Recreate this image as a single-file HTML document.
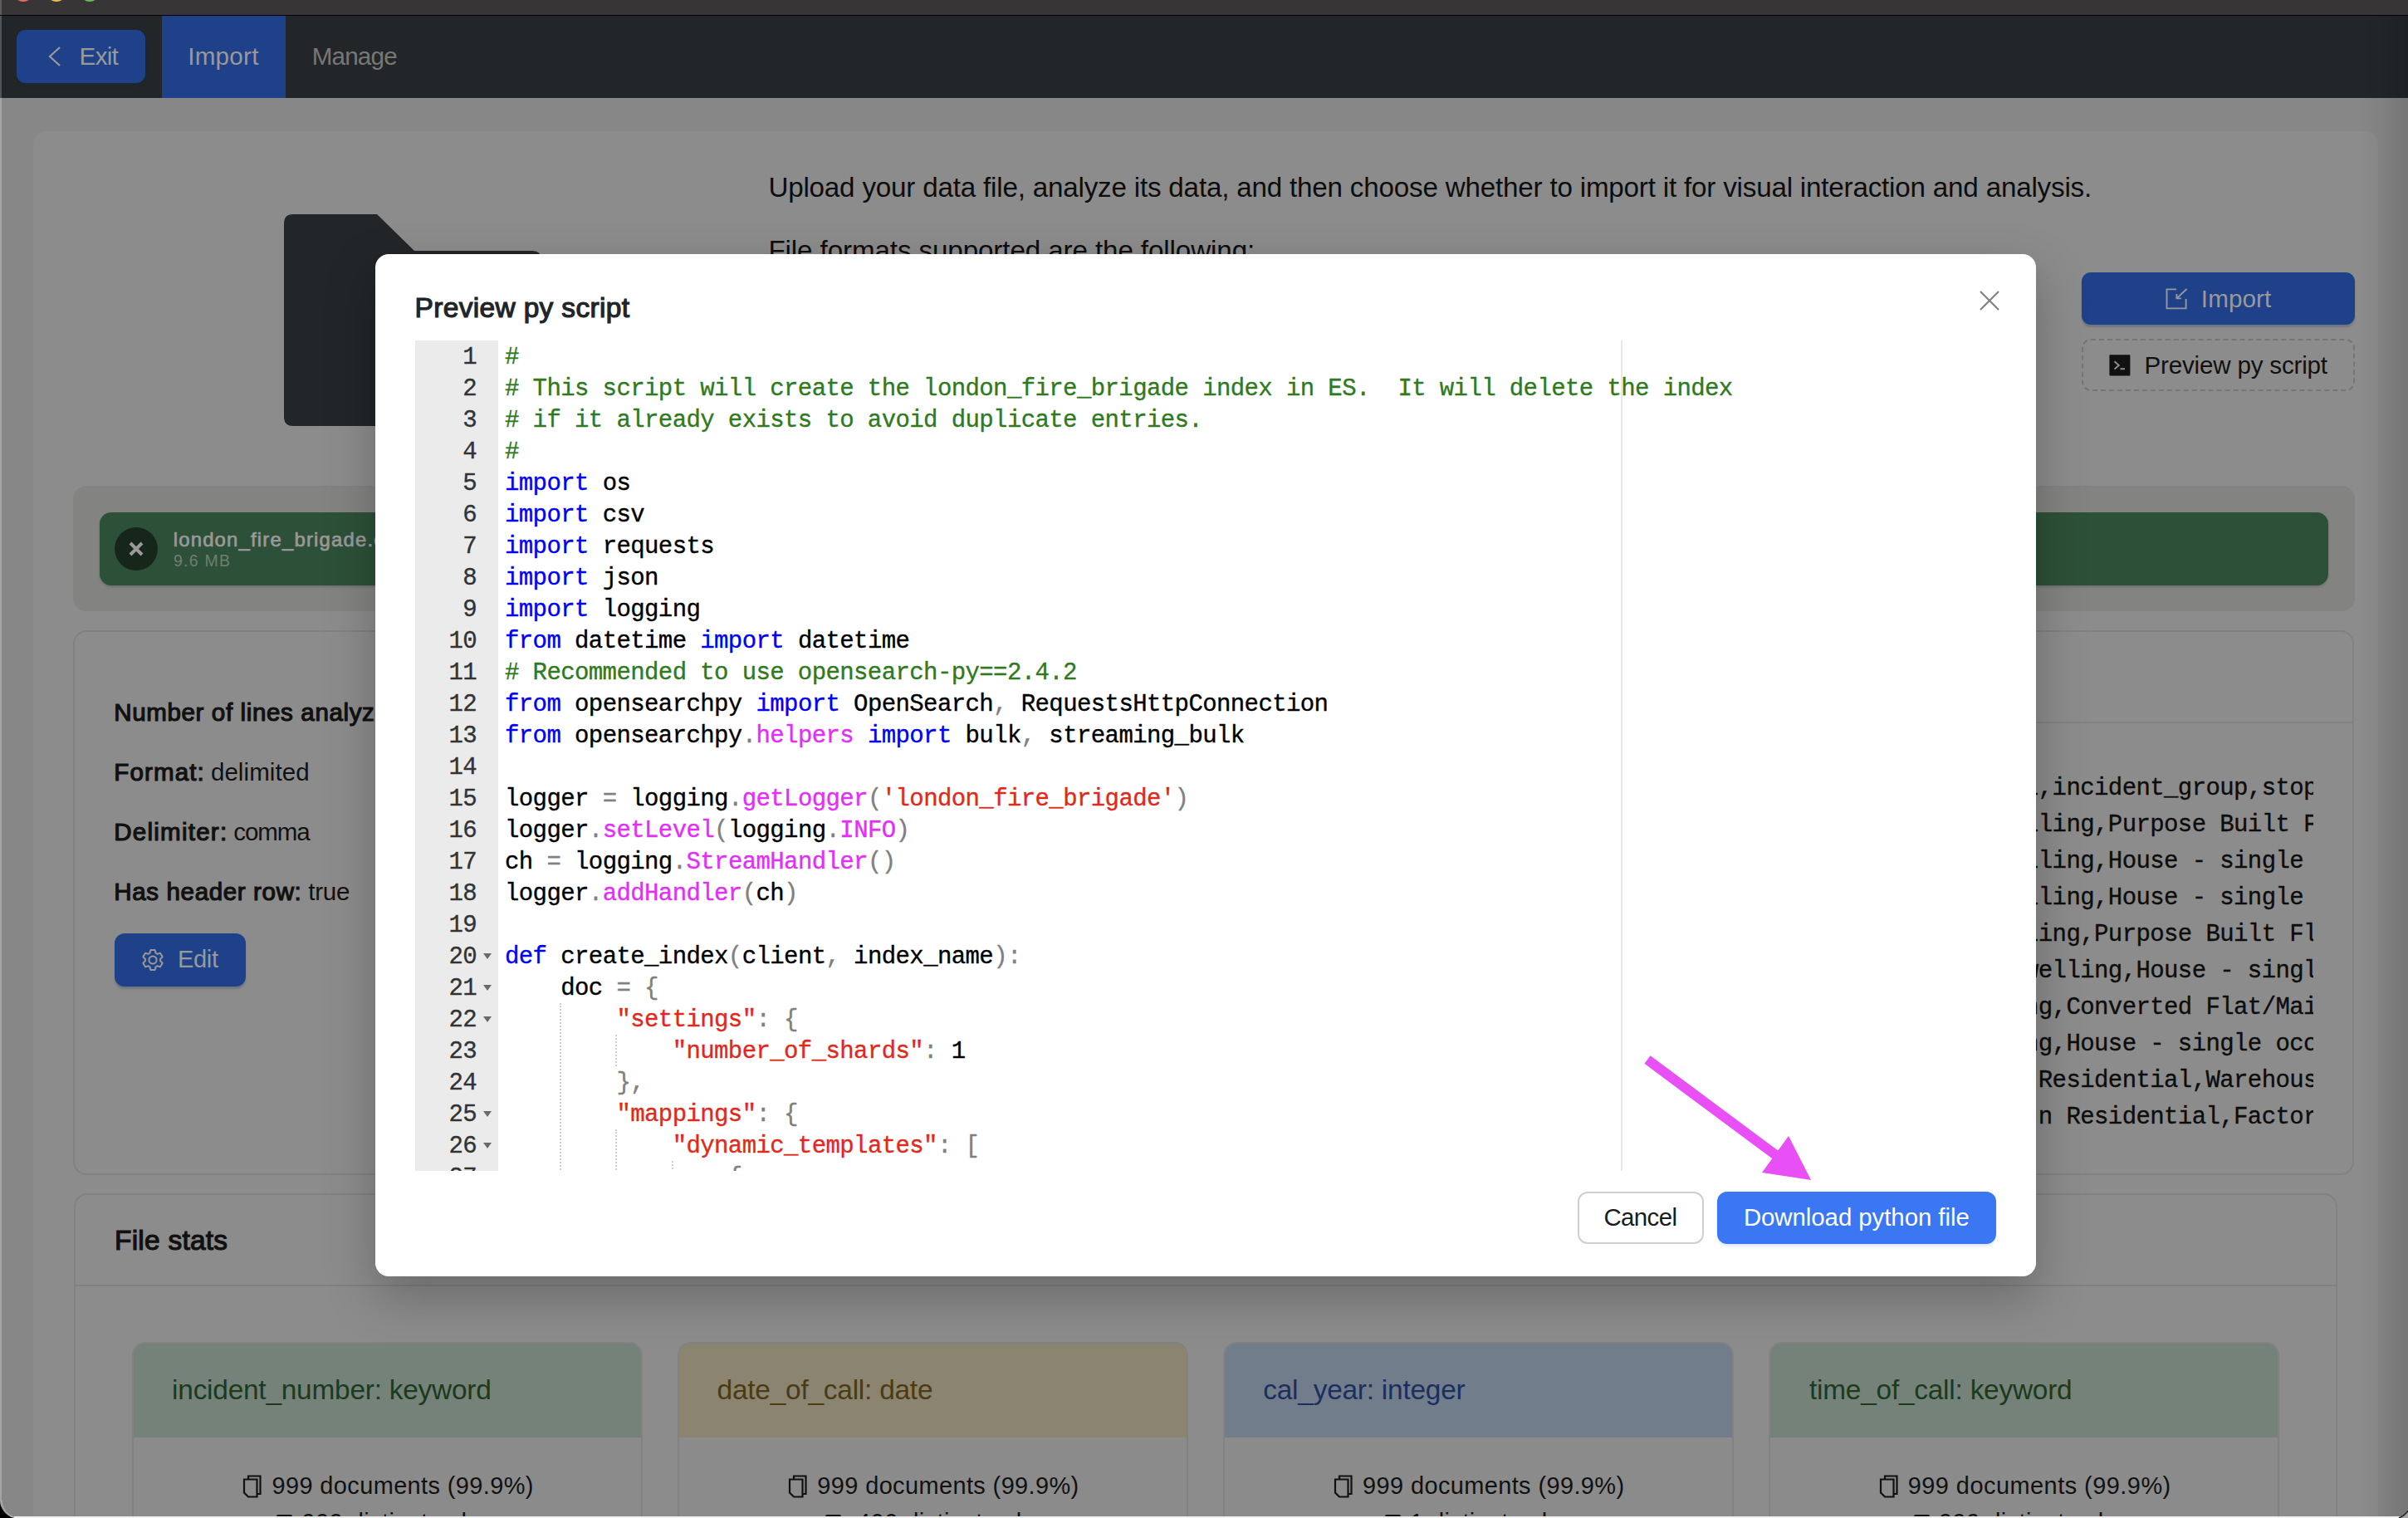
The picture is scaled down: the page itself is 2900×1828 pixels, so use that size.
<!DOCTYPE html>
<html><head><meta charset="utf-8">
<style>
*{margin:0;padding:0;box-sizing:border-box}
html,body{width:2900px;height:1828px;overflow:hidden;background:#878787;font-family:"Liberation Sans",sans-serif;position:relative}
.abs{position:absolute}
.tx{position:absolute;white-space:nowrap}
.tx b{font-weight:normal;-webkit-text-stroke:1.0px currentColor}
#titlebar{left:0;top:0;width:2900px;height:18px;background:#383536;overflow:hidden}
#titleline{left:0;top:18px;width:2900px;height:1px;background:#000}
.tl{position:absolute;top:-22px;width:24px;height:24px;border-radius:50%}
#nav{left:0;top:19px;width:2900px;height:99px;background:#222629}
#leftedge{left:0;top:19px;width:2px;height:99px;background:#50555a}
#leftedge2{left:0;top:118px;width:2px;height:1710px;background:#a4a4a4}
#exit{left:20px;top:36px;width:155px;height:64px;background:#1f418a;border-radius:11px;box-shadow:0 3px 2px rgba(30,40,60,.5)}
#importtab{left:195px;top:19px;width:149px;height:99px;background:#1f418a}
#card1{left:40px;top:158px;width:2824px;height:1700px;background:#8c8c8c;border-radius:16px}
#rightshade{left:2840px;top:19px;width:60px;height:1809px;background:linear-gradient(to right,rgba(0,0,0,0) 0%,rgba(0,0,0,.04) 40%,rgba(0,0,0,.13) 100%)}
#btnimport{left:2507px;top:328px;width:329px;height:63px;background:#1f418a;border-radius:11px;box-shadow:0 3px 2px rgba(60,80,110,.35)}
#btnprev{left:2507px;top:408px;width:329px;height:63px;border:2px dashed #757575;border-radius:11px}
#filepond{left:88px;top:585px;width:2748px;height:151px;background:#838381;border-radius:16px}
#pill{left:120px;top:617px;width:2684px;height:88px;background:#2d5038;border-radius:14px;box-shadow:0 2px 3px rgba(0,0,0,.15)}
#pillx{left:138px;top:635px;width:52px;height:52px;border-radius:50%;background:#16261b}
#stats{left:88px;top:759px;width:2747px;height:656px;border:2px solid #818181;border-radius:16px}
#statsline{left:1400px;top:869px;width:1435px;height:2px;background:#818181}
#edit{left:138px;top:1124px;width:158px;height:64px;background:#1f418a;border-radius:12px;box-shadow:0 3px 2px rgba(60,80,110,.35)}
#data{left:2354px;top:928px;width:432px;height:460px;overflow:hidden;-webkit-text-stroke:0.35px currentColor;font-family:"Liberation Mono",monospace;font-size:29px;letter-spacing:-0.6px;line-height:44px;color:#0d0d0d;white-space:pre}
#filestats{left:89px;top:1437px;width:2726px;height:500px;border:2px solid #818181;border-radius:16px}
#fsline{left:89px;top:1547px;width:2726px;height:2px;background:#818181}
.fcard{position:absolute;top:1615.5px;width:615px;height:300px;border:2px solid #828282;border-radius:16px;overflow:hidden;background:#8b8b8b}
.fhead{position:absolute;left:0;top:0;width:100%;height:113px}
#bottomline{left:0;top:1826px;width:2900px;height:2px;background:#f0f0f0}
#modal{left:452px;top:306px;width:2000px;height:1231px;background:#fff;border-radius:16px;box-shadow:0 24px 60px rgba(0,0,0,.25)}
#mclose{left:2384px;top:350px;width:24px;height:24px}
#gutter{left:500px;top:410px;width:100px;height:1000px;background:#ebebeb;overflow:hidden}
#code{left:500px;top:410px;width:1904px;height:1000px;overflow:hidden;-webkit-text-stroke:0.35px currentColor;font-family:"Liberation Mono",monospace;font-size:29px;letter-spacing:-0.6px;line-height:38px}
#margin{left:1952px;top:410px;width:2px;height:1000px;background:#e8e8e8}
.ln{position:absolute;left:0;margin-top:2px;width:74px;text-align:right;color:#333;white-space:pre}
.cl{position:absolute;left:108px;margin-top:2px;white-space:pre;color:#000}
.c{color:#2f7a1f}.k{color:#0000f5}.o{color:#808080}.f{color:#e22ef6}.s{color:#e0291d}
.fold{position:absolute;left:82px;margin-top:0px;width:0;height:0;border-left:5px solid transparent;border-right:5px solid transparent;border-top:7px solid #6a6a6a}
.guide{position:absolute;width:0;border-left:2px dotted #cfcfcf}
#cancel{left:1900px;top:1435px;width:152px;height:63px;border:2px solid #cfcfcf;border-radius:12px;background:#fff}
#download{left:2068px;top:1435px;width:336px;height:63px;background:#3b76f3;border-radius:12px;box-shadow:0 3px 3px rgba(59,118,243,.15)}
#arrow{left:0;top:0;width:2900px;height:1828px;pointer-events:none}

</style></head>
<body>
<div id="titlebar" class="abs">
  <div class="tl" style="left:16px;background:#ef6b5e"></div>
  <div class="tl" style="left:56px;background:#f4bf4f"></div>
  <div class="tl" style="left:96px;background:#61c554"></div>
  <div style="position:absolute;left:0;top:0;width:2px;height:18px;background:#5c5c5c"></div>
</div>
<div id="titleline" class="abs"></div>
<div id="nav" class="abs"></div>
<div id="leftedge" class="abs"></div>
<div id="exit" class="abs">
  <svg class="abs" style="left:36px;top:19px" width="20" height="26" viewBox="0 0 20 26"><path d="M16 2 L4 13 L16 24" fill="none" stroke="#999" stroke-width="2.2"/></svg>
</div>
<div id="importtab" class="abs"></div>

<div id="card1" class="abs"></div>
<svg class="abs" style="left:342px;top:258px" width="340" height="255" viewBox="0 0 340 255">
  <path d="M11 0 H112 L157 44 H299.5 Q309.5 44 309.5 54 V245 Q309.5 255 299.5 255 H11 Q0 255 0 244 V11 Q0 0 11 0 Z" fill="#222629"/>
</svg>
<div id="btnimport" class="abs">
  <svg class="abs" style="left:100px;top:19px" width="28" height="28" viewBox="0 0 28 28"><path d="M14 1.4 H2.5 V24.4 H25.6 V12.9" fill="none" stroke="#999" stroke-width="1.9"/><path d="M26.5 1 L14.4 12.4 M14.4 7 V12.4 H19.9" fill="none" stroke="#999" stroke-width="1.9"/></svg>
</div>
<div id="btnprev" class="abs">
  <svg class="abs" style="left:31px;top:17px" width="26" height="26" viewBox="0 0 26 26"><rect x="0.4" y="0.3" width="25" height="25.2" rx="1" fill="#111"/><path d="M6.5 8.2 L11.8 12.9 L6.5 17.6" fill="none" stroke="#8c8c8c" stroke-width="2"/><path d="M13.5 17.2 H19" stroke="#8c8c8c" stroke-width="2"/></svg>
</div>

<div id="filepond" class="abs"></div>
<div id="pill" class="abs"></div>
<div id="pillx" class="abs"><svg class="abs" style="left:16px;top:17px" width="20" height="18" viewBox="0 0 20 18"><path d="M3 2 L17 16 M17 2 L3 16" stroke="#999" stroke-width="4"/></svg></div>

<div id="stats" class="abs"></div>
<div id="statsline" class="abs"></div>
<div id="edit" class="abs">
  <svg class="abs" style="left:31px;top:16.6px" width="30" height="30" viewBox="0 0 30 30"><path d="M11.34 6.78 L12.46 3.07 L17.54 3.07 L18.66 6.78 L20.29 7.72 L24.07 6.84 L26.60 11.23 L23.95 14.06 L23.95 15.94 L26.60 18.77 L24.07 23.16 L20.29 22.28 L18.66 23.22 L17.54 26.93 L12.46 26.93 L11.34 23.22 L9.71 22.28 L5.93 23.16 L3.40 18.77 L6.05 15.94 L6.05 14.06 L3.40 11.23 L5.93 6.84 L9.71 7.72 Z" fill="none" stroke="#999" stroke-width="2" stroke-linejoin="round"/><circle cx="15" cy="15" r="4.6" fill="none" stroke="#999" stroke-width="2"/></svg>
</div>
<div id="data" class="abs">f_call,incident_group,stop_code_desc
  Dwelling,Purpose Built Flats
  Dwelling,House - single occupancy
  Dwelling,House - single occupancy
 Dwelling,Purpose Built Flats
    Dwelling,House - single occupanc
welling,Converted Flat/Maisonette
welling,House - single occupancy
  Non Residential,Warehouse
      n Residential,Factory</div>

<div id="filestats" class="abs"></div>
<div id="fsline" class="abs"></div>
<div class="fcard" style="left:159px"><div class="fhead" style="background:#75827a"></div></div>
<div class="fcard" style="left:816px"><div class="fhead" style="background:#8b8470"></div></div>
<div class="fcard" style="left:1473px"><div class="fhead" style="background:#717d8b"></div></div>
<div class="fcard" style="left:2130px"><div class="fhead" style="background:#75827a"></div></div>
<svg class="abs" style="left:292px;top:1776px" width="23" height="28" viewBox="0 0 23 28"><path d="M7 5 V1.5 H21.5 V23 H18" fill="none" stroke="#111" stroke-width="2.2"/><path d="M2 5.5 H17.5 V26.5 H7 L2 21.5 Z" fill="none" stroke="#111" stroke-width="2.2"/></svg>
<svg class="abs" style="left:949px;top:1776px" width="23" height="28" viewBox="0 0 23 28"><path d="M7 5 V1.5 H21.5 V23 H18" fill="none" stroke="#111" stroke-width="2.2"/><path d="M2 5.5 H17.5 V26.5 H7 L2 21.5 Z" fill="none" stroke="#111" stroke-width="2.2"/></svg>
<svg class="abs" style="left:1606px;top:1776px" width="23" height="28" viewBox="0 0 23 28"><path d="M7 5 V1.5 H21.5 V23 H18" fill="none" stroke="#111" stroke-width="2.2"/><path d="M2 5.5 H17.5 V26.5 H7 L2 21.5 Z" fill="none" stroke="#111" stroke-width="2.2"/></svg>
<svg class="abs" style="left:2263px;top:1776px" width="23" height="28" viewBox="0 0 23 28"><path d="M7 5 V1.5 H21.5 V23 H18" fill="none" stroke="#111" stroke-width="2.2"/><path d="M2 5.5 H17.5 V26.5 H7 L2 21.5 Z" fill="none" stroke="#111" stroke-width="2.2"/></svg>

<div class="abs" style="left:333px;top:1823.5px;width:19px;height:10px;border:2px solid #111;border-radius:2px"></div>
<div class="abs" style="left:994px;top:1823.5px;width:19px;height:10px;border:2px solid #111;border-radius:2px"></div>
<div class="abs" style="left:1668px;top:1823.5px;width:19px;height:10px;border:2px solid #111;border-radius:2px"></div>
<div class="abs" style="left:2305px;top:1823.5px;width:19px;height:10px;border:2px solid #111;border-radius:2px"></div>
<div class="tx" id="t_exit" style="left:95.6px;top:53.04px;font-size:29.6px;line-height:29.6px;letter-spacing:-0.703px;color:#999;">Exit</div>
<div class="tx" id="t_importtab" style="left:226.2px;top:53.04px;font-size:29.6px;line-height:29.6px;letter-spacing:0.271px;color:#999;">Import</div>
<div class="tx" id="t_manage" style="left:375.7px;top:53.04px;font-size:29.6px;line-height:29.6px;letter-spacing:-0.797px;color:#777;">Manage</div>
<div class="tx" id="t_desc" style="left:925.4px;top:208.5px;font-size:33.2px;line-height:33.2px;letter-spacing:-0.197px;color:#0d0d0d;">Upload your data file, analyze its data, and then choose whether to import it for visual interaction and analysis.</div>
<div class="tx" id="t_desc2" style="left:925.4px;top:284.7px;font-size:33.2px;line-height:33.2px;letter-spacing:-0.112px;color:#0d0d0d;">File formats supported are the following:</div>
<div class="tx" id="t_btnimport" style="left:2650.8px;top:345.14px;font-size:29.6px;line-height:29.6px;letter-spacing:0.111px;color:#999;">Import</div>
<div class="tx" id="t_btnprev" style="left:2582.5px;top:425.04px;font-size:29.6px;line-height:29.6px;letter-spacing:-0.196px;color:#111;">Preview py script</div>
<div class="tx" id="t_pillname" style="left:208.7px;top:637.59px;font-size:23.87px;line-height:23.87px;letter-spacing:1.204px;color:#999;-webkit-text-stroke:0.7px currentColor;">london_fire_brigade.csv</div>
<div class="tx" id="t_pillsize" style="left:209px;top:666.31px;font-size:19.48px;line-height:19.48px;letter-spacing:1.262px;color:#6e7f72;">9.6 MB</div>
<div class="tx" id="t_kv2a" style="left:137.3px;top:914.93px;font-size:29.5px;line-height:29.5px;letter-spacing:1.146px;color:#111;-webkit-text-stroke:1.2px currentColor;">Format:</div>
<div class="tx" id="t_kv2b" style="left:253.9px;top:914.93px;font-size:29.5px;line-height:29.5px;letter-spacing:0.081px;color:#111;">delimited</div>
<div class="tx" id="t_kv3a" style="left:137.3px;top:987.03px;font-size:29.5px;line-height:29.5px;letter-spacing:1.248px;color:#111;-webkit-text-stroke:1.2px currentColor;">Delimiter:</div>
<div class="tx" id="t_kv3b" style="left:281.2px;top:987.03px;font-size:29.5px;line-height:29.5px;letter-spacing:-1.051px;color:#111;">comma</div>
<div class="tx" id="t_kv4a" style="left:137.3px;top:1059.03px;font-size:29.5px;line-height:29.5px;letter-spacing:0.647px;color:#111;-webkit-text-stroke:1.2px currentColor;">Has header row:</div>
<div class="tx" id="t_kv4b" style="left:371.2px;top:1059.03px;font-size:29.5px;line-height:29.5px;letter-spacing:-0.209px;color:#111;">true</div>
<div class="tx" id="t_kv1" style="left:137.2px;top:843.13px;font-size:29.5px;line-height:29.5px;letter-spacing:0.647px;color:#111;-webkit-text-stroke:1.2px currentColor;">Number of lines analyzed:</div>
<div class="tx" id="t_edit" style="left:214px;top:1141.35px;font-size:29.0px;line-height:29.0px;letter-spacing:-0.305px;color:#999;">Edit</div>
<div class="tx" id="t_fstitle" style="left:138px;top:1476.7px;font-size:33.43px;line-height:33.43px;letter-spacing:0.255px;color:#111;-webkit-text-stroke:1.2px currentColor;">File stats</div>
<div class="tx" id="t_fh1" style="left:207.1px;top:1657.23px;font-size:33.4px;line-height:33.4px;letter-spacing:-0.221px;color:#1c3a1c;">incident_number: keyword</div>
<div class="tx" id="t_fh2" style="left:863.6px;top:1657.23px;font-size:33.4px;line-height:33.4px;letter-spacing:-0.221px;color:#4a3b14;">date_of_call: date</div>
<div class="tx" id="t_fh3" style="left:1521.3px;top:1657.23px;font-size:33.4px;line-height:33.4px;letter-spacing:-0.221px;color:#1b2f5e;">cal_year: integer</div>
<div class="tx" id="t_fh4" style="left:2179px;top:1657.23px;font-size:33.4px;line-height:33.4px;letter-spacing:-0.221px;color:#1c3a1c;">time_of_call: keyword</div>
<div class="tx" id="t_fb1" style="left:327.5px;top:1775.02px;font-size:28.92px;line-height:28.92px;letter-spacing:0.401px;color:#111;">999 documents (99.9%)</div>
<div class="tx" id="t_fb2" style="left:984.3px;top:1775.02px;font-size:28.92px;line-height:28.92px;letter-spacing:0.401px;color:#111;">999 documents (99.9%)</div>
<div class="tx" id="t_fb3" style="left:1641.1px;top:1775.02px;font-size:28.92px;line-height:28.92px;letter-spacing:0.401px;color:#111;">999 documents (99.9%)</div>
<div class="tx" id="t_fb4" style="left:2297.7px;top:1775.02px;font-size:28.92px;line-height:28.92px;letter-spacing:0.481px;color:#111;">999 documents (99.9%)</div>
<div class="tx" id="t_dv1" style="left:363.6px;top:1818.89px;font-size:29.07px;line-height:29.07px;letter-spacing:0.401px;color:#111;">999 distinct values</div>
<div class="tx" id="t_dv2" style="left:1032px;top:1818.89px;font-size:29.07px;line-height:29.07px;letter-spacing:0.401px;color:#111;">400 distinct values</div>
<div class="tx" id="t_dv3" style="left:1698px;top:1818.89px;font-size:29.07px;line-height:29.07px;letter-spacing:0.401px;color:#111;">1 distinct value</div>
<div class="tx" id="t_dv4" style="left:2335px;top:1818.89px;font-size:29.07px;line-height:29.07px;letter-spacing:0.401px;color:#111;">999 distinct values</div>

<div id="rightshade" class="abs"></div>
<div id="leftedge2" class="abs"></div>
<div id="bottomline" class="abs"></div>
<svg class="abs" style="left:0;top:1800px" width="28" height="28" viewBox="0 0 28 28"><path d="M0 6 A22 22 0 0 0 17 28 H0 Z" fill="#000"/><path d="M2 7 A21 21 0 0 0 17 27" fill="none" stroke="#a8a8a8" stroke-width="1.5"/></svg>
<svg class="abs" style="left:2872px;top:1800px" width="28" height="28" viewBox="0 0 28 28"><path d="M28 19 A22 22 0 0 1 17 28 H28 Z" fill="#a4a4a4"/><path d="M28 19.5 A22 22 0 0 1 17 28" fill="none" stroke="#222" stroke-width="1.5"/></svg>


<!-- MODAL -->
<div id="modal" class="abs"></div>
<svg id="mclose" class="abs" viewBox="0 0 24 24"><path d="M1 1 L23 23 M23 1 L1 23" stroke="#808080" stroke-width="2.2"/></svg>
<div id="gutter" class="abs"></div>
<div id="margin" class="abs"></div>
<div id="code" class="abs">
<div class="ln" style="top:0px">1</div>
<div class="cl" style="top:0px"><span class="c">#</span></div>
<div class="ln" style="top:38px">2</div>
<div class="cl" style="top:38px"><span class="c"># This script will create the london_fire_brigade index in ES.  It will delete the index</span></div>
<div class="ln" style="top:76px">3</div>
<div class="cl" style="top:76px"><span class="c"># if it already exists to avoid duplicate entries.</span></div>
<div class="ln" style="top:114px">4</div>
<div class="cl" style="top:114px"><span class="c">#</span></div>
<div class="ln" style="top:152px">5</div>
<div class="cl" style="top:152px"><span class="k">import</span> os</div>
<div class="ln" style="top:190px">6</div>
<div class="cl" style="top:190px"><span class="k">import</span> csv</div>
<div class="ln" style="top:228px">7</div>
<div class="cl" style="top:228px"><span class="k">import</span> requests</div>
<div class="ln" style="top:266px">8</div>
<div class="cl" style="top:266px"><span class="k">import</span> json</div>
<div class="ln" style="top:304px">9</div>
<div class="cl" style="top:304px"><span class="k">import</span> logging</div>
<div class="ln" style="top:342px">10</div>
<div class="cl" style="top:342px"><span class="k">from</span> datetime <span class="k">import</span> datetime</div>
<div class="ln" style="top:380px">11</div>
<div class="cl" style="top:380px"><span class="c"># Recommended to use opensearch-py==2.4.2</span></div>
<div class="ln" style="top:418px">12</div>
<div class="cl" style="top:418px"><span class="k">from</span> opensearchpy <span class="k">import</span> OpenSearch<span class="o">,</span> RequestsHttpConnection</div>
<div class="ln" style="top:456px">13</div>
<div class="cl" style="top:456px"><span class="k">from</span> opensearchpy<span class="o">.</span><span class="f">helpers</span> <span class="k">import</span> bulk<span class="o">,</span> streaming_bulk</div>
<div class="ln" style="top:494px">14</div>
<div class="cl" style="top:494px"></div>
<div class="ln" style="top:532px">15</div>
<div class="cl" style="top:532px">logger <span class="o">=</span> logging<span class="o">.</span><span class="f">getLogger</span><span class="o">(</span><span class="s">&#x27;london_fire_brigade&#x27;</span><span class="o">)</span></div>
<div class="ln" style="top:570px">16</div>
<div class="cl" style="top:570px">logger<span class="o">.</span><span class="f">setLevel</span><span class="o">(</span>logging<span class="o">.</span><span class="f">INFO</span><span class="o">)</span></div>
<div class="ln" style="top:608px">17</div>
<div class="cl" style="top:608px">ch <span class="o">=</span> logging<span class="o">.</span><span class="f">StreamHandler</span><span class="o">()</span></div>
<div class="ln" style="top:646px">18</div>
<div class="cl" style="top:646px">logger<span class="o">.</span><span class="f">addHandler</span><span class="o">(</span>ch<span class="o">)</span></div>
<div class="ln" style="top:684px">19</div>
<div class="cl" style="top:684px"></div>
<div class="ln" style="top:722px">20</div>
<div class="fold" style="top:738px"></div>
<div class="cl" style="top:722px"><span class="k">def</span> create_index<span class="o">(</span>client<span class="o">,</span> index_name<span class="o">):</span></div>
<div class="ln" style="top:760px">21</div>
<div class="fold" style="top:776px"></div>
<div class="cl" style="top:760px">    doc <span class="o">=</span> <span class="o">{</span></div>
<div class="ln" style="top:798px">22</div>
<div class="fold" style="top:814px"></div>
<div class="cl" style="top:798px">        <span class="s">&quot;settings&quot;</span><span class="o">:</span> <span class="o">{</span></div>
<div class="ln" style="top:836px">23</div>
<div class="cl" style="top:836px">            <span class="s">&quot;number_of_shards&quot;</span><span class="o">:</span> 1</div>
<div class="ln" style="top:874px">24</div>
<div class="cl" style="top:874px">        <span class="o">},</span></div>
<div class="ln" style="top:912px">25</div>
<div class="fold" style="top:928px"></div>
<div class="cl" style="top:912px">        <span class="s">&quot;mappings&quot;</span><span class="o">:</span> <span class="o">{</span></div>
<div class="ln" style="top:950px">26</div>
<div class="fold" style="top:966px"></div>
<div class="cl" style="top:950px">            <span class="s">&quot;dynamic_templates&quot;</span><span class="o">:</span> <span class="o">[</span></div>
<div class="ln" style="top:988px">27</div>
<div class="fold" style="top:1004px"></div>
<div class="cl" style="top:988px">                <span class="o">{</span></div>
<div class="guide" style="left:174.2px;top:798px;height:228px"></div>
<div class="guide" style="left:241.4px;top:836px;height:38px"></div>
<div class="guide" style="left:241.4px;top:950px;height:76px"></div>
<div class="guide" style="left:308.6px;top:988px;height:38px"></div>
</div>
<div id="cancel" class="abs"></div>
<div id="download" class="abs"></div>
<div class="tx" id="t_title" style="left:499.5px;top:354.1px;font-size:33.43px;line-height:33.43px;letter-spacing:0.375px;color:#212529;-webkit-text-stroke:1.2px currentColor;">Preview py script</div>
<div class="tx" id="t_cancel" style="left:1931.5px;top:1451.01px;font-size:29.4px;line-height:29.4px;letter-spacing:-0.611px;color:#1b1b1b;">Cancel</div>
<div class="tx" id="t_download" style="left:2099.9px;top:1451.01px;font-size:29.4px;line-height:29.4px;letter-spacing:-0.053px;color:#fff;">Download python file</div>
<svg id="arrow" class="abs" viewBox="0 0 2900 1828">
  <path d="M1984 1276 L2140 1392" stroke="#e84ff5" stroke-width="12"/>
  <path d="M2181 1421 L2122 1412 L2154 1368 Z" fill="#e84ff5"/>
</svg>

</body></html>
